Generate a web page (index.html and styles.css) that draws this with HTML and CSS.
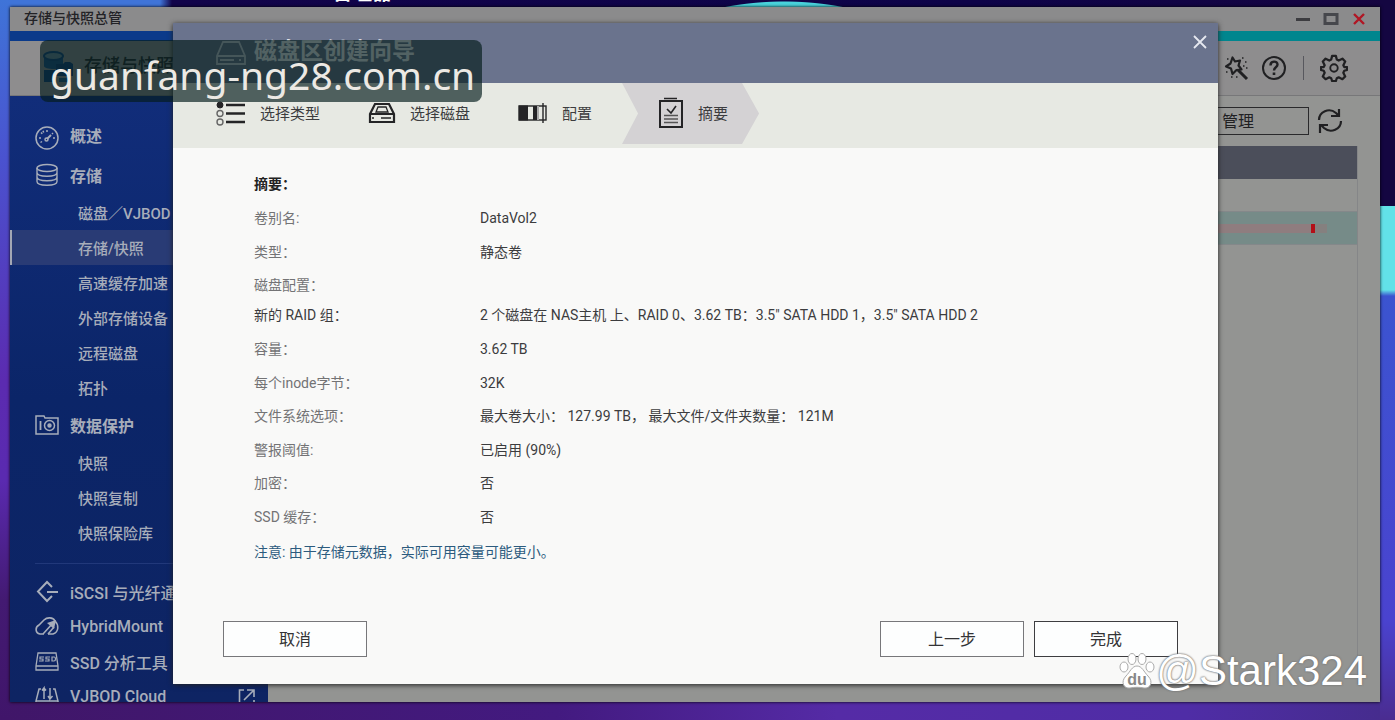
FILE: index.html
```
<!DOCTYPE html>
<html lang="zh-CN">
<head>
<meta charset="utf-8">
<meta name="viewport" content="width=device-width, initial-scale=1">
<title>存储与快照总管</title>
<link rel="stylesheet" href="styles.css">
</head>
<body class="desktop">
<span class="desktop-label">管理器</span>
<div class="window">
  <header class="titlebar">
    <h1 class="titlebar-name">存储与快照总管</h1>
    <div class="titlebar-controls">
      <button class="icon-button" aria-label="最小化"><svg width="16" height="16" viewBox="0 0 16 16"><path d="M1 8.500h14" stroke="#3c3c40" stroke-width="3"/></svg></button>
      <button class="icon-button" aria-label="最大化"><svg width="16" height="16" viewBox="0 0 16 16"><rect x="2" y="3.500" width="12" height="9" fill="none" stroke="#46474c" stroke-width="3"/></svg></button>
      <button class="icon-button" aria-label="关闭窗口"><svg width="16" height="16" viewBox="0 0 16 16"><path d="M3 3l10 10M13 3L3 13" stroke="#b01624" stroke-width="2.400"/></svg></button>
    </div>
  </header>
  <div class="accent"></div>
  <div class="appbar">
    <svg class="app-logo" width="34" height="36" viewBox="0 0 34 36">
      <path d="M2 6v10c0 4 19 4 19 0V6" fill="#1b4f86"/>
      <ellipse cx="11.500" cy="6" rx="9.500" ry="4" fill="#6a8798" stroke="#14457c" stroke-width="2"/>
      <path d="M14 14h7l2-2h5l3 2v12H14z" fill="#123d78"/>
      <path d="M2 20h11v12H2z" fill="#123d78"/>
      <path d="M17 28h12v4H17z" fill="#235584"/>
    </svg>
    <strong class="app-name">存储与快照总管</strong>
    <div class="app-tools">
      <button class="icon-button" aria-label="向导"><svg width="26" height="26" viewBox="0 0 26 26" fill="none" stroke="#202022" stroke-width="2.200"><path d="M9.500 2.500l2.500 4 5-1-1.500 5 3 4-5 .5-4 4-1.500-5.500L3 11.500l4.500-3z" stroke-linejoin="round"/><path d="M15 15l9 9" stroke-width="3"/><path d="M19 3h1.500M22 7h1.500M20 11h1.500M23 13h1.500M3 17h1.500M8 22h1.500M13 22h1.500M4 4h1.500" stroke-width="1.500"/></svg></button>
      <button class="icon-button" aria-label="帮助"><svg width="26" height="26" viewBox="0 0 26 26" fill="none" stroke="#202022" stroke-width="2"><circle cx="13" cy="13" r="11"/><path d="M9.500 10.500c0-5 7-5 7-1 0 3-3.500 2.500-3.500 6" stroke-width="2.400"/><path d="M13 17.500V20" stroke-width="2.600"/></svg></button>
      <span class="tool-divider"></span>
      <button class="icon-button" aria-label="设置"><svg width="28" height="28" viewBox="0 0 30 30" fill="none" stroke="#202022" stroke-width="2.400" stroke-linejoin="round"><path d="M13 2h4l1 4 2 1 4-2 3 3-2 4 1 2 3 0v3l-3 1-1 2 2 4-3 3-4-2-2 1-1 3h-4l-1-3-2-1-4 2-3-3 2-4-1-2-3-1v-3h3l1-2-2-4 3-3 4 2 2-1z"/><circle cx="15" cy="15" r="4" stroke-width="2"/></svg></button>
    </div>
  </div>
  <div class="workspace">
    <nav class="sidebar" aria-label="功能">
      <a class="nav-head" href="#overview"><svg width="24" height="30" viewBox="0 -6 24 30" fill="none" stroke="currentColor" stroke-width="1.500"><circle cx="12" cy="12" r="11"/><path d="M12 13l4-4" stroke-width="2"/><circle cx="11.500" cy="13.500" r="1.500"/><path d="M12 4v2M6 6.500l1.300 1.300M4 12h2M18 12h2M5.500 16.500l1.500-1M18 7l-1 1M8 4.800l.7 1.700"/></svg>概述</a>
      <a class="nav-head" href="#storage"><svg width="24" height="24" viewBox="0 0 24 24" fill="none" stroke="currentColor" stroke-width="1.400"><ellipse cx="12" cy="5" rx="10" ry="3.500"/><path d="M2 5v13.500c0 5 20 5 20 0V5M2 9.500c0 5 20 5 20 0M2 14c0 5 20 5 20 0"/></svg>存储</a>
      <a class="nav-item" href="#disks">磁盘／VJBOD</a>
      <a class="nav-item is-active" href="#snapshots" aria-current="page">存储/快照</a>
      <a class="nav-item" href="#cache">高速缓存加速</a>
      <a class="nav-item" href="#external">外部存储设备</a>
      <a class="nav-item" href="#remote">远程磁盘</a>
      <a class="nav-item" href="#topology">拓扑</a>
      <a class="nav-head" href="#protect"><svg width="24" height="24" viewBox="0 0 24 24" fill="none" stroke="currentColor" stroke-width="1.500"><path d="M1 5V3h8l1 2h13v16H1z"/><path d="M5.500 8v9" stroke-width="1.800"/><circle cx="14.500" cy="12.500" r="5"/><circle cx="14.500" cy="12.500" r="1.500" fill="currentColor"/></svg>数据保护</a>
      <a class="nav-item" href="#snapshot">快照</a>
      <a class="nav-item" href="#replica">快照复制</a>
      <a class="nav-item" href="#vault">快照保险库</a>
      <hr class="nav-rule">
      <a class="nav-app" href="#iscsi"><svg width="24" height="24" viewBox="0 0 24 24" fill="none" stroke="currentColor" stroke-width="2"><path d="M17 7l-5-5-9 9.500L12 21l5-5M12 12h11"/></svg>iSCSI 与光纤通道</a>
      <a class="nav-app" href="#hybrid"><svg width="24" height="24" viewBox="0 0 24 24" fill="none" stroke="currentColor" stroke-width="1.600"><path d="M9 19H5c-5-1-5-7-1-9L9 5c3-3 9-3 11 1 4 4 4 11-2 13h-5M8 19L18 8"/><path d="M12 8l9-3-2 9z" fill="currentColor" stroke="none"/><path d="M13 19l6-7"/></svg>HybridMount</a>
      <a class="nav-app" href="#ssd"><svg width="24" height="24" viewBox="0 0 24 24" fill="none" stroke="currentColor" stroke-width="1.300"><path d="M3 3h18l2 13v4H1v-4zM1 16h22"/><path d="M9 7H5v2h3v2H4M15 7h-4v2h3v2h-4M17 7v4h2c2 0 2-4 0-4z" stroke-width="1.200"/></svg>SSD 分析工具</a>
      <a class="nav-app" href="#vjbod"><svg width="24" height="24" viewBox="0 0 24 24" fill="none" stroke="currentColor" stroke-width="1.500"><path d="M6 4H4L1 16v5h22v-5L20 4h-2M1 16h22M9 14V3L7 5.500M15 3v11l2.500-3M9 3l2 2.500M15 14l-2-3M3 19h4"/></svg>VJBOD Cloud<svg class="external" width="18" height="18" viewBox="0 0 18 18" fill="none" stroke="currentColor" stroke-width="1.600"><path d="M6 2H1.500v15H16v-5M9 2h7v7M16 2L6 12"/></svg></a>
    </nav>
    <main class="content">
      <div class="toolbar">
        <button class="manage">管理</button>
        <button class="icon-button" aria-label="刷新"><svg width="26" height="28" viewBox="0 0 26 28" fill="none" stroke="#202022" stroke-width="2.200"><path d="M2 13C2 5 12 0 19 6l3 3M22 2v7h-8M24 14c0 8-10 13-17 7l-3-3M3 26v-8h8"/></svg></button>
      </div>
      <div class="volumes">
        <div class="volumes-head"></div>
        <div class="volumes-row"></div>
        <div class="volumes-row is-selected"><span class="usage"></span></div>
      </div>
    </main>
  </div>

  <section class="dialog" role="dialog" aria-labelledby="wizard-title">
    <header class="dialog-head">
      <svg width="30" height="26" viewBox="0 0 30 26" fill="none" stroke="#c9cbd3" stroke-width="1.800"><path d="M7 2h16l6 14v8H1v-8zM1 16h28M4 20h14M23 20h2"/></svg>
      <h2 class="dialog-title" id="wizard-title">磁盘区创建向导</h2>
      <button class="icon-button dialog-close" aria-label="关闭"><svg width="16" height="16" viewBox="0 0 16 16"><path d="M2 2l12 12M14 2L2 14" stroke="#e6e8f0" stroke-width="1.800"/></svg></button>
    </header>
    <ol class="steps">
      <li class="step"><svg width="30" height="26" viewBox="0 0 30 26" fill="none" stroke="#242426"><circle cx="4" cy="5" r="3" fill="#242426"/><circle cx="4" cy="13.500" r="3" stroke-width="1.400" stroke="#666"/><circle cx="4" cy="22" r="3" stroke-width="1.400" stroke="#666"/><path d="M10 5h19M10 13.500h19M10 22h19" stroke-width="2.400"/></svg>选择类型</li>
      <li class="step"><svg width="28" height="22" viewBox="0 0 28 22" fill="none" stroke="#242426" stroke-width="2.200"><path d="M7 2h14l5 10v8H2v-8zM2 12h24"/><path d="M10 5h8l2 5H8z" stroke-width="1.300"/><path d="M4 16h2M13 16h10" stroke-width="1.600"/></svg>选择磁盘</li>
      <li class="step"><svg width="30" height="22" viewBox="0 0 30 22" fill="none" stroke="#242426"><rect x="1" y="4" width="27" height="14" stroke-width="1.400"/><path d="M1 3.500h9v15H1zM15 4h6v14h-6z" fill="#242426" stroke="none"/><path d="M20 4v14" stroke="#aaa" stroke-width="2"/><path d="M25 1v20" stroke-width="1.400"/></svg>配置</li>
      <li class="step is-current" aria-current="step"><svg width="26" height="32" viewBox="0 0 26 32" fill="none" stroke="#242426" stroke-width="2"><rect x="2" y="4" width="22" height="26"/><path d="M6 1.500h13" stroke-width="1.400"/><path d="M9 12l4 4 5-7" stroke-width="1.600"/><path d="M6 18.500h14M6 22h14M6 25.500h14" stroke-width="1.500" stroke="#555"/></svg>摘要</li>
    </ol>
    <div class="summary">
      <h3 class="summary-title">摘要：</h3>
      <dl class="facts">
        <div class="fact"><dt>卷别名:</dt><dd>DataVol2</dd></div>
        <div class="fact"><dt>类型：</dt><dd>静态卷</dd></div>
        <div class="fact"><dt>磁盘配置：</dt><dd></dd></div>
        <div class="fact is-raid"><dt>新的 RAID 组：</dt><dd>2 个磁盘在 NAS主机 上、RAID 0、3.62 TB：3.5" SATA HDD 1，3.5" SATA HDD 2</dd></div>
        <div class="fact"><dt>容量：</dt><dd>3.62 TB</dd></div>
        <div class="fact"><dt>每个inode字节：</dt><dd>32K</dd></div>
        <div class="fact"><dt>文件系统选项：</dt><dd>最大卷大小： 127.99 TB， 最大文件/文件夹数量： 121M</dd></div>
        <div class="fact"><dt>警报阈值:</dt><dd>已启用 (90%)</dd></div>
        <div class="fact"><dt>加密：</dt><dd>否</dd></div>
        <div class="fact"><dt>SSD 缓存：</dt><dd>否</dd></div>
      </dl>
      <p class="note">注意: 由于存储元数据，实际可用容量可能更小。</p>
    </div>
    <footer class="dialog-actions">
      <button class="button">取消</button>
      <button class="button push">上一步</button>
      <button class="button is-primary">完成</button>
    </footer>
  </section>
</div>
<div class="site-mark">guanfang-ng28.com.cn</div>
<div class="author-mark">
  <svg width="38" height="38" viewBox="0 0 38 38"><g fill="#fff" stroke="#aaa" stroke-width="1"><ellipse cx="6" cy="15" rx="4" ry="5"/><ellipse cx="14" cy="7" rx="4" ry="5.500"/><ellipse cx="24" cy="7" rx="4" ry="5.500"/><ellipse cx="32" cy="15" rx="4" ry="5"/><path d="M19 14c5 0 7 6 11 10 6 6 2 13-4 12-5-1-9-1-14 0-6 1-10-6-4-12 4-4 6-10 11-10z"/></g><text class="paw-text" x="19" y="33" text-anchor="middle">du</text></svg>
  <span>@Stark324</span>
</div>
</body>
</html>
```
FILE: styles.css
```
* { box-sizing: border-box; }

.desktop {
  position: relative;
  min-height: 100vh;
  margin: 0;
  padding: 7px 15px 18px 10px;
  overflow: hidden;
  font-family: Roboto, "Noto Sans CJK SC", sans-serif;
  font-size: 14px;
  color: #3c3c3e;
  background:
    linear-gradient(#140641 0 206px, #62e2e8 206px 290px, #3b54d0 296px, #4a43cf 620px, #4a2c90 100%) right / 15px 100% no-repeat,
    linear-gradient(#3f74d8, #4a52cf 160px, #5b2bb0 380px, #5a2ab0 480px, #431a72 600px, #40156a) left / 10px 100% no-repeat,
    linear-gradient(90deg, #401668, #431a80 40%, #552ba6 60%, #4f2da6 85%, #452c8c) bottom / 100% 18px no-repeat,
    radial-gradient(circle at 784px 318px, #49d3dc 316px, transparent 317px),
    linear-gradient(90deg, #3f74d8 160px, #12044a 172px, #0d0348 70%, #160540);
}

.desktop-label {
  position: absolute;
  top: -17px;
  left: 332px;
  font-size: 20px;
  font-weight: 700;
  line-height: 20px;
  color: #fff;
}

.window {
  position: relative;
  display: flex;
  flex-direction: column;
  height: calc(100vh - 25px);
  overflow: hidden;
  background: #939492;
  box-shadow: 0 0 3px #000;
}

.icon-button {
  display: flex;
  padding: 0;
  border: 0;
  background: none;
}

.titlebar {
  display: flex;
  flex: none;
  align-items: center;
  justify-content: space-between;
  height: 24px;
  padding: 0 13px 0 14px;
  background: #8b8b8c;
}

.titlebar-name {
  margin: 0;
  padding-bottom: 4px;
  font-size: 14px;
  font-weight: 500;
  color: #222226;
}

.titlebar-controls { display: flex; gap: 12px; }

.accent {
  flex: none;
  height: 10px;
  background: linear-gradient(90deg, #0b3a8a 12%, #00868e 60%);
}

.appbar {
  display: flex;
  flex: none;
  align-items: center;
  height: 55px;
  padding: 0 32px 0 32px;
  background: #8e8d8e;
  border-bottom: 1px solid #777779;
}

.app-name {
  margin-left: 8px;
  padding-bottom: 8px;
  font-size: 18px;
  font-weight: 500;
  color: #26282c;
}

.app-tools {
  display: flex;
  align-items: center;
  gap: 12px;
  margin-left: auto;
}

.tool-divider {
  width: 1px;
  height: 24px;
  margin: 0 4px;
  background: #58585e;
}

.workspace { display: flex; flex: 1; min-height: 0; }

.sidebar {
  flex: none;
  width: 258px;
  padding-top: 19px;
  overflow: hidden;
  color: #a7adba;
  background: linear-gradient(#112d7a, #0b2568 50%, #0e2463);
}

.sidebar a {
  display: flex;
  align-items: center;
  color: inherit;
  text-decoration: none;
  white-space: nowrap;
}

.nav-head,
.nav-app {
  gap: 11px;
  height: 40px;
  padding-left: 25px;
  font-size: 16px;
  font-weight: 700;
}

.nav-app { height: 35px; font-weight: 500; }

.nav-item {
  height: 35px;
  padding-left: 68px;
  font-size: 15px;
  font-weight: 500;
}

.nav-item.is-active {
  padding-left: 66px;
  border-left: 2px solid #a3a7b4;
  background: #293b75;
}

.nav-rule {
  margin: 13px 0 10px 25px;
  border: 0;
  border-top: 1px solid #21387a;
}

.external { margin: 0 12px 0 auto; }

.content {
  flex: 1;
  min-width: 0;
  padding: 9px 22px 0 24px;
}

.toolbar {
  display: flex;
  align-items: center;
  justify-content: flex-end;
  gap: 8px;
  height: 32px;
  margin-right: 15px;
}

.manage {
  width: 100px;
  height: 28px;
  padding: 0 0 2px 12px;
  border: 1px solid #29292b;
  background: none;
  font: inherit;
  font-size: 16px;
  text-align: left;
  color: #202022;
}

.volumes {
  height: calc(100% - 59px);
  margin-top: 9px;
  border-right: 1px solid #858688;
}

.volumes-head { height: 33px; background: #4b4e5a; }

.volumes-row {
  display: flex;
  align-items: center;
  justify-content: flex-end;
  height: 33px;
  border-bottom: 1px solid #84888a;
}

.volumes-row.is-selected { padding-right: 30px; background: #768b88; }

.usage {
  width: 200px;
  height: 9px;
  background: linear-gradient(90deg, #8f7d7f 184px, #b30f18 184px 188px, #85807f 188px);
}

.dialog {
  position: absolute;
  inset: 16px 162px 18px 163px;
  display: flex;
  flex-direction: column;
  background: #f9f9f8;
  box-shadow: 0 1px 5px #222;
}

.dialog-head {
  display: flex;
  flex: none;
  gap: 8px;
  height: 60px;
  padding: 17px 10px 0 43px;
  background: #6a738d;
}

.dialog-title {
  margin: 0;
  font-size: 23px;
  font-weight: 700;
  line-height: 24px;
  color: #f0f0f2;
}

.dialog-close { align-self: flex-start; margin: -6px 0 0 auto; }

.steps {
  display: flex;
  flex: none;
  gap: 48px;
  height: 65px;
  margin: 0;
  padding: 0 0 4px 43px;
  list-style: none;
  background: #e7e9e3;
}

.step {
  display: flex;
  align-items: center;
  gap: 14px;
  padding-bottom: 2px;
  font-size: 15px;
}

.step.is-current {
  margin-left: -18px;
  padding: 0 31px 2px 36px;
  clip-path: polygon(0 0, 120px 0, 100% 50%, 120px 100%, 0 100%, 16px 50%);
  background: #d4d2d4;
}

.summary { flex: 1; padding: 19px 40px 0 81px; }

.summary-title {
  margin: 0;
  font-size: 14px;
  font-weight: 700;
  line-height: 34px;
  color: #222;
}

.facts { margin: 0; line-height: 33px; }

.fact {
  display: grid;
  grid-template-columns: 226px 1fr;
}

.fact:nth-child(-n+2),
.fact:nth-child(even) { line-height: 34px; }

.fact dt { color: #737375; }
.fact dd { margin: 0; }

.fact.is-raid {
  margin-bottom: 5px;
  line-height: 26px;
}

.fact.is-raid dt { color: #3c3c3e; }

.note {
  margin: 0;
  line-height: 36px;
  color: #2c5b7e;
}

.dialog-actions {
  display: flex;
  flex: none;
  gap: 10px;
  padding: 0 40px 27px 50px;
}

.button {
  width: 144px;
  height: 36px;
  padding: 0 0 2px;
  border: 1px solid #77777a;
  background: #fdfefe;
  font: inherit;
  font-size: 16px;
  color: #333335;
}

.button.push { margin-left: auto; }
.button.is-primary { border-color: #3d3d40; }

.site-mark {
  position: absolute;
  top: 40px;
  left: 40px;
  padding: 8px 7px 0 10px;
  border-radius: 8px;
  font-family: "Noto Sans", sans-serif;
  font-size: 39px;
  line-height: 54px;
  color: #ece9e4;
  background: rgba(5, 28, 28, .67);
}

.author-mark {
  position: absolute;
  right: 28px;
  bottom: 26px;
  display: flex;
  align-items: center;
  font-family: "Liberation Sans", sans-serif;
  font-size: 42px;
  line-height: 46px;
  color: #fff;
  text-shadow: 0 0 2px #666, 0 0 2px #888;
}

.paw-text {
  font-size: 16px;
  font-weight: 700;
  fill: #888;
  text-shadow: none;
}
```
